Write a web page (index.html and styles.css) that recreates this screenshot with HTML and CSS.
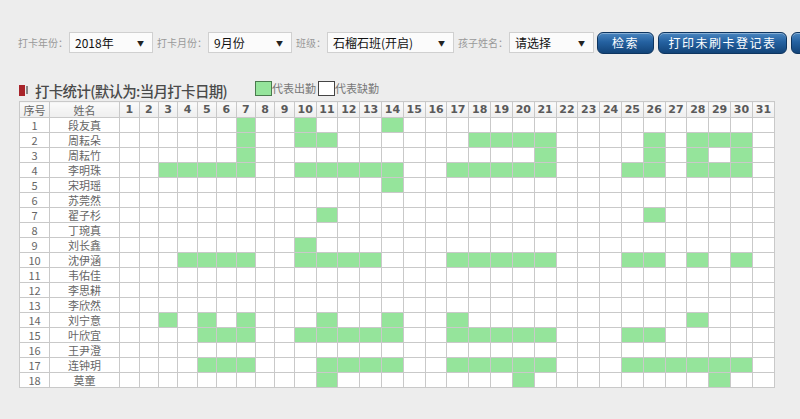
FILE: index.html
```html
<!DOCTYPE html>
<html>
<head>
  <meta charset="utf-8">
  <title>打卡统计</title>
  <link rel="stylesheet" href="styles.css">
</head>
<body>
  <!-- 查询条件 -->
  <div class="toolbar">
    <span class="label">打卡年份：</span>
    <div class="select sel-year"><span>2018年</span><i>&#9660;</i></div>
    <span class="label">打卡月份：</span>
    <div class="select sel-month"><span>9月份</span><i>&#9660;</i></div>
    <span class="label">班级：</span>
    <div class="select sel-class"><span>石榴石班(开启)</span><i>&#9660;</i></div>
    <span class="label">孩子姓名：</span>
    <div class="select sel-child"><span>请选择</span><i>&#9660;</i></div>
    <button class="btn btn-search">检索</button>
    <button class="btn btn-print">打印未刷卡登记表</button>
    <button class="btn btn-export" title="导出"></button>
  </div>

  <!-- 标题 + 图例 -->
  <div class="title-row">
    <span class="title-mark"><b></b><s></s></span>
    <span class="title">打卡统计(默认为:当月打卡日期)</span>
    <span class="legend"><em class="box box-on"></em>代表出勤</span>
    <span class="legend"><em class="box"></em>代表缺勤</span>
  </div>

  <table class="stat-table">
    <colgroup id="cols"></colgroup>
    <thead><tr id="head"></tr></thead>
    <tbody id="rows"></tbody>
  </table>

  <script src="script.js"></script>
</body>
</html>
```

FILE: styles.css
```css
html, body {
  margin: 0;
  padding: 0;
  background-color: #ededed;
  overflow: hidden;
}

body {
  font-family: "Noto Sans CJK SC", "Liberation Sans", sans-serif;
  color: #555;
}

.toolbar {
  display: flex;
  align-items: center;
  white-space: nowrap;
  padding: 32px 0 0 18px;
  height: 21px;
}

.toolbar > * {
  flex: none;
}

.label {
  font-size: 10px;
  color: #999;
  margin-right: 1px;
}

.select {
  display: flex;
  align-items: center;
  justify-content: space-between;
  box-sizing: border-box;
  height: 21px;
  padding: 0 8px 0 5px;
  margin-right: 4px;
  border: 1px solid #d0d0d0;
  background-color: #fbfbfb;
  font-size: 12px;
  color: #111;
}

.select i {
  font-style: normal;
  font-size: 7px;
  color: #222;
}

.sel-year { width: 84px; }
.sel-month { width: 84px; }
.sel-class { width: 127px; }
.sel-child { width: 85px; margin-right: 3px; }

.btn {
  box-sizing: border-box;
  height: 22px;
  padding: 0;
  margin-right: 4px;
  border: 1px solid #0e3560;
  border-radius: 6px;
  background: linear-gradient(#4b86c0, #2461a0 45%, #134479);
  box-shadow: inset 0 1px 0 rgba(255, 255, 255, 0.35);
  color: #fff;
  font-family: "Noto Sans CJK SC", sans-serif;
  font-size: 12px;
  letter-spacing: 1.5px;
}

.btn-search { width: 57px; }
.btn-print { width: 129px; }
.btn-export { width: 40px; }

.title-row {
  display: flex;
  align-items: center;
  height: 20px;
  margin: 27px 0 1px 19px;
}

.title-mark {
  display: flex;
  align-items: center;
  margin-right: 7px;
}

.title-mark b {
  display: block;
  width: 6px;
  height: 11px;
  background-color: #a8242a;
}

.title-mark s {
  display: block;
  width: 2px;
  height: 8px;
  margin-left: 1px;
  background-color: #888;
}

.title {
  font-size: 14.5px;
  font-weight: 500;
  letter-spacing: -0.7px;
  color: #4a4a4a;
  margin-right: 28px;
}

.legend {
  display: flex;
  align-items: center;
  font-size: 11px;
  color: #777;
  margin-right: 2px;
  padding-bottom: 4px;
}

.box {
  display: block;
  width: 15px;
  height: 13px;
  border: 1px solid #444;
  background-color: #fff;
}

.box-on {
  background-color: #95e49b;
  border-color: #4a7a4e;
}

.stat-table {
  margin-left: 19px;
  width: 756px;
  table-layout: fixed;
  border-collapse: collapse;
  background-color: #fff;
}

.stat-table th,
.stat-table td {
  border: 1px solid #c9c9c9;
  padding: 0;
  text-align: center;
  overflow: hidden;
  white-space: nowrap;
}

.stat-table th {
  height: 15px;
  font-size: 11px;
  line-height: 14px;
  font-family: "DejaVu Sans", "Liberation Sans", sans-serif;
  font-weight: bold;
  color: #5a5a5a;
  background: linear-gradient(#fafafa, #eeeeee);
}

.stat-table th.cn {
  font-family: "Noto Sans CJK SC", sans-serif;
  font-weight: normal;
  color: #666;
}

.stat-table td {
  height: 14px;
  font-size: 11px;
  line-height: 13px;
  color: #666;
}

.stat-table td.on {
  background-color: #95e49b;
}
```

FILE: script.js
```js
// 每个孩子本月的出勤日期
var students = [
  ['段友真', [7, 10, 14]],
  ['周耘朵', [7, 10, 11, 18, 19, 20, 21, 26, 28, 29, 30]],
  ['周耘竹', [7, 21, 26, 28, 30]],
  ['李明珠', [3, 4, 5, 6, 7, 10, 11, 12, 13, 14, 17, 18, 19, 20, 21, 25, 26, 28, 29, 30]],
  ['宋玥瑶', [14]],
  ['苏莞然', []],
  ['翟子杉', [11, 26]],
  ['丁琬真', []],
  ['刘长鑫', [10]],
  ['沈伊涵', [4, 5, 6, 7, 10, 11, 12, 13, 17, 18, 19, 20, 21, 25, 26, 28, 30]],
  ['韦佑佳', []],
  ['李思耕', []],
  ['李欣然', []],
  ['刘宁意', [3, 5, 7, 11, 14, 17, 28]],
  ['叶欣宜', [5, 6, 7, 10, 11, 12, 13, 14, 17, 18, 19, 20, 21, 25, 26]],
  ['王尹澄', []],
  ['连钟玥', [5, 6, 7, 11, 12, 13, 14, 17, 18, 19, 20, 21, 25, 26, 27, 28, 29, 30]],
  ['莫童', [11, 20, 29]]
];

var days = 31;
var cols = '<col style="width:30px"><col style="width:70px">';
var head = '<th class="cn">序号</th><th class="cn">姓名</th>';
for (var d = 1; d <= days; d++) {
  cols += '<col style="width:' + (d < 10 ? 19.4 : 21.8) + 'px">';
  head += '<th>' + d + '</th>';
}
document.getElementById('cols').innerHTML = cols;
document.getElementById('head').innerHTML = head;

var html = '';
students.forEach(function (s, i) {
  html += '<tr><td>' + (i + 1) + '</td><td>' + s[0] + '</td>';
  for (var d = 1; d <= days; d++) {
    html += s[1].indexOf(d) >= 0 ? '<td class="on"></td>' : '<td></td>';
  }
  html += '</tr>';
});
document.getElementById('rows').innerHTML = html;
```
